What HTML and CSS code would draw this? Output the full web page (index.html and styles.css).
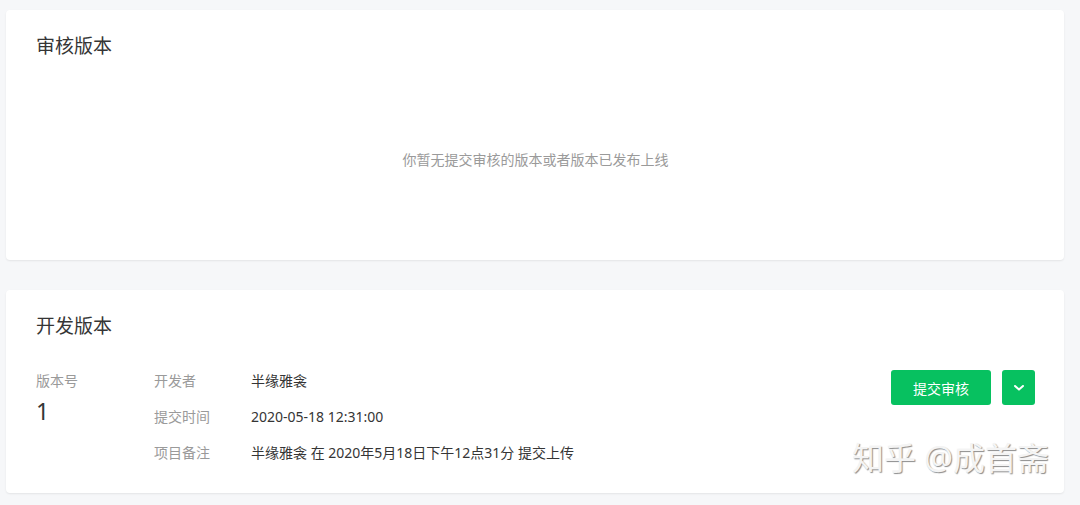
FILE: index.html
```html
<!DOCTYPE html>
<html lang="zh-CN">
<head>
    <meta charset="UTF-8">
    <title>版本管理</title>
    <link rel="stylesheet" href="styles.css">
</head>
<body>
    <div class="panel panel-audit">
        <h2 class="panel-title">审核版本</h2>
        <p class="empty-tip">你暂无提交审核的版本或者版本已发布上线</p>
    </div>

    <div class="panel panel-dev">
        <h2 class="panel-title">开发版本</h2>
        <div class="version-row">
            <div class="version-no">
                <div class="label">版本号</div>
                <div class="num">1</div>
            </div>
            <div class="version-info">
                <div class="info-line"><span class="label info-label">开发者</span><span class="value">半缘雅衾</span></div>
                <div class="info-line"><span class="label info-label">提交时间</span><span class="value">2020-05-18 12:31:00</span></div>
                <div class="info-line"><span class="label info-label">项目备注</span><span class="value">半缘雅衾 在 2020年5月18日下午12点31分 提交上传</span></div>
            </div>
            <div class="actions">
                <button class="btn btn-submit">提交审核</button>
                <button class="btn btn-more">
                    <svg width="10" height="6" viewBox="0 0 10 6"><path d="M1 1l4 3.6L9 1" fill="none" stroke="#fff" stroke-width="2" stroke-linecap="round" stroke-linejoin="round"/></svg>
                </button>
            </div>
        </div>
    </div>

    <div class="watermark">知乎 @成首斋</div>
</body>
</html>
```

FILE: styles.css
```css
body {
    margin: 0;
    padding: 10px 16px 0 6px;
    background-color: #f6f7f9;
    font-family: "Noto Sans", "Noto Sans CJK SC", sans-serif;
    color: #353535;
    position: relative;
    height: 495px;
    overflow: hidden;
}
.panel {
    background: #fff;
    border-radius: 4px;
    box-shadow: 0 1px 2px rgba(0, 0, 0, 0.08);
    padding: 24px 29px 0 30px;
    box-sizing: border-box;
}
.panel-audit {
    height: 250px;
}
.panel-dev {
    margin-top: 30px;
    padding-bottom: 30px;
}
.panel-title {
    margin: 0;
    font-size: 19px;
    line-height: 24px;
    font-weight: normal;
    color: #353535;
}
.empty-tip {
    margin: 92px 0 0;
    text-align: center;
    font-size: 14px;
    line-height: 20px;
    color: #9a9a9a;
}
.version-row {
    display: flex;
    margin-top: 33px;
}
.label {
    font-size: 14px;
    line-height: 20px;
    color: #9a9a9a;
}
.version-no {
    width: 118px;
}
.num {
    margin-top: 5px;
    font-size: 23px;
    line-height: 30px;
}
.version-info {
    flex: 1;
    display: flex;
    flex-direction: column;
    gap: 16px;
}
.info-line {
    display: flex;
    font-size: 14px;
    line-height: 20px;
}
.info-label {
    width: 97px;
}
.value {
    color: #353535;
}
.actions {
    display: flex;
    gap: 11px;
    align-items: flex-start;
    margin-top: -1px;
}
.btn {
    height: 35px;
    border: none;
    border-radius: 3px;
    background-color: #07c160;
    color: #fff;
    font-family: inherit;
    font-size: 14px;
    padding: 0;
    cursor: pointer;
}
.btn-submit {
    width: 100px;
}
.btn-more {
    width: 33px;
    display: flex;
    align-items: center;
    justify-content: center;
}
.watermark {
    position: absolute;
    left: 852px;
    top: 436px;
    font-size: 32px;
    line-height: 44px;
    color: #f4f4f4;
    text-shadow: 1px 1px 1px #8c8c8c;
    white-space: nowrap;
}
```
